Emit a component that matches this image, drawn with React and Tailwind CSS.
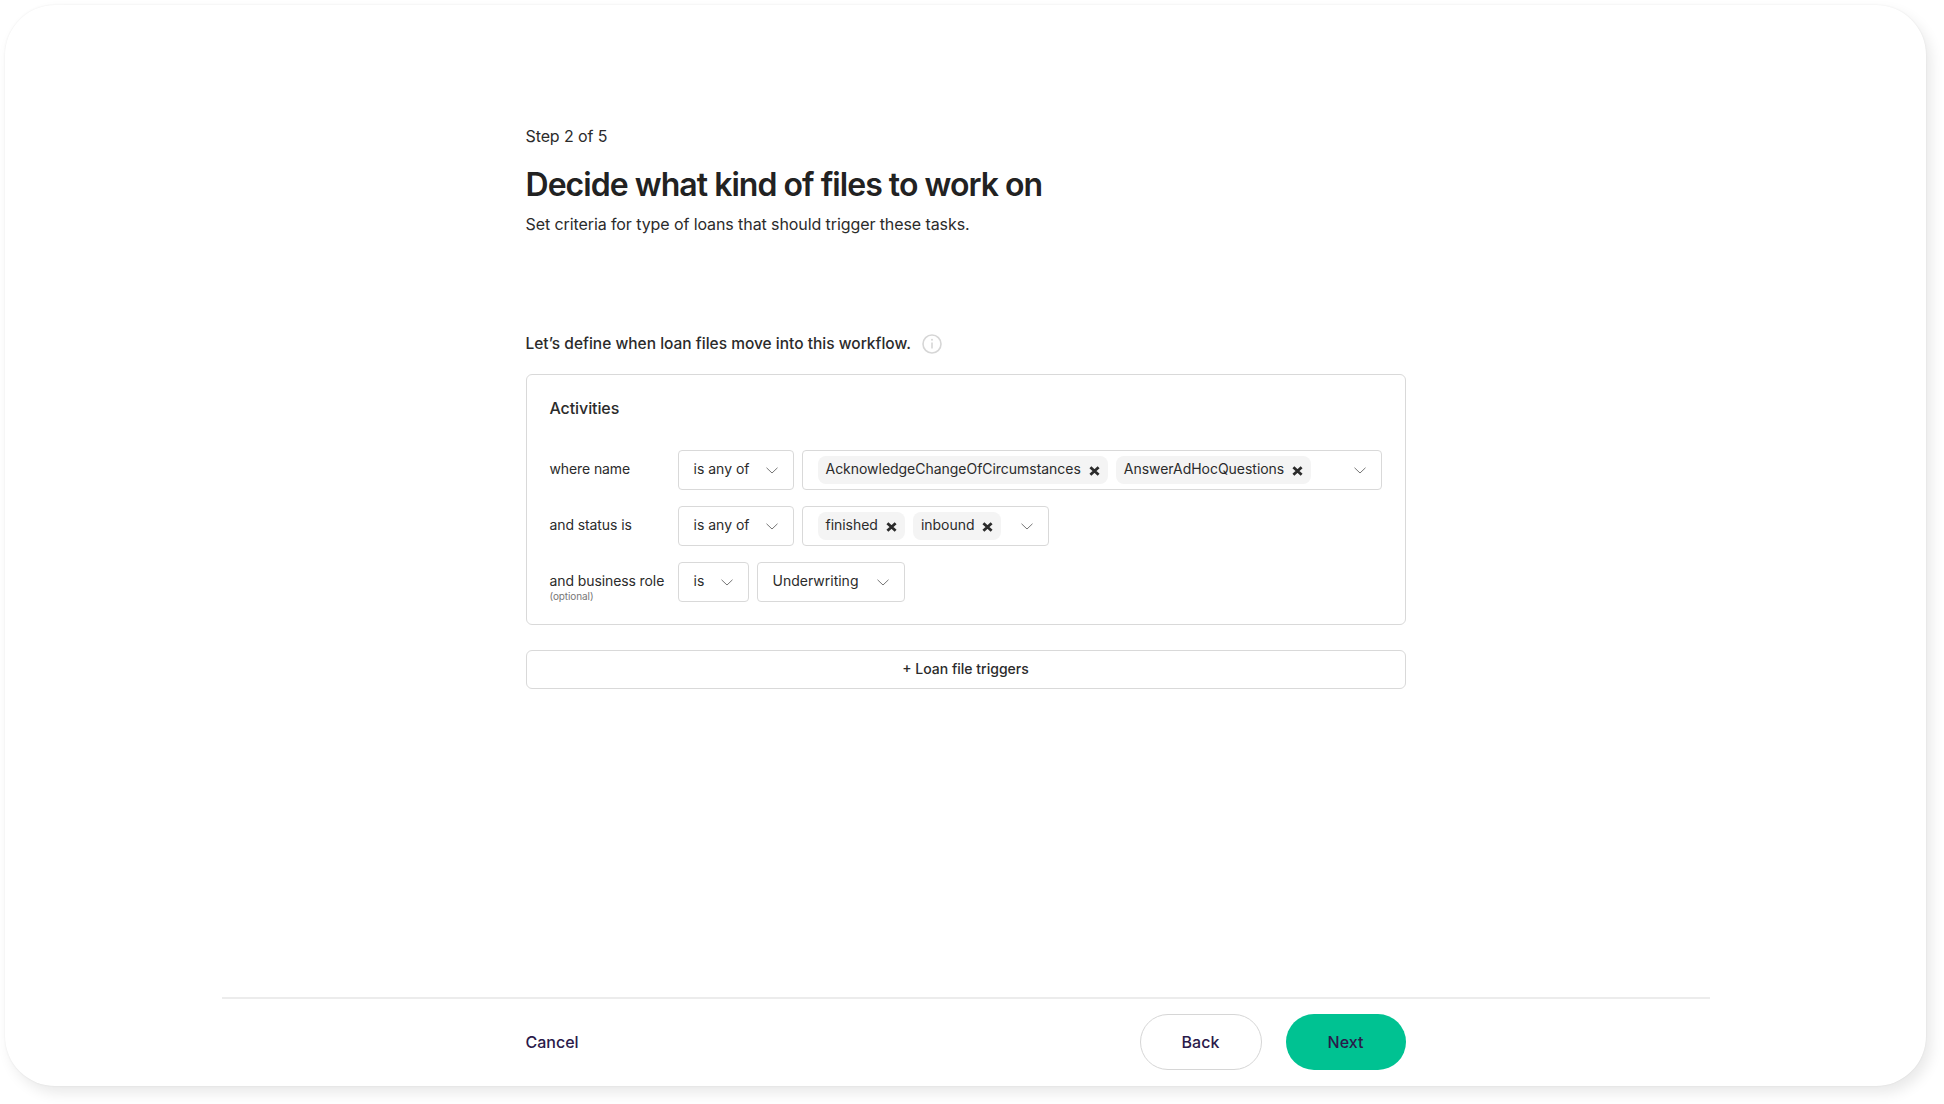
import { Fragment } from "react";

const Chevron = () => (
  <svg width="12" height="7" viewBox="0 0 12 7" fill="none" className="shrink-0">
    <path d="M0.5 0.75 L6 6 L11.5 0.75" stroke="#767676" strokeWidth="1" />
  </svg>
);

const Remove = () => (
  <svg width="11" height="10" viewBox="0 0 11 10" fill="none" className="shrink-0 mt-[2px]">
    <path d="M1.4 1.2 L9.6 8.8 M9.6 1.2 L1.4 8.8" stroke="#2b2b2b" strokeWidth="2.8" />
  </svg>
);

const Chip = ({ label }) => (
  <div className="flex h-[28px] items-center gap-2 rounded-lg bg-[#f4f4f4] pl-2 pr-2">
    <span className="pb-[3px] tracking-[-0.03px]">{label}</span>
    <Remove />
  </div>
);

const Select = ({ label, className }) => (
  <div className={`flex h-10 items-center justify-between rounded border border-[#d9d9d9] pl-[15px] pr-[15px] ${className}`}>
    <span className="pb-[3px]">{label}</span>
    <Chevron />
  </div>
);

const MultiSelect = ({ chips, className }) => (
  <div className={`flex h-10 items-center justify-between gap-5 rounded border border-[#d9d9d9] pl-[15px] pr-[15px] ${className}`}>
    <div className="flex gap-2">
      {chips.map((c) => (
        <Fragment key={c}>
          <Chip label={c} />
        </Fragment>
      ))}
    </div>
    <Chevron />
  </div>
);

export default function App() {
  return (
    <div className="h-[1104px] w-[1944px] overflow-hidden bg-white pl-[5px] pt-[5px] font-['Inter',sans-serif] text-[#2b2b2b]">
      <div className="flex h-[1081px] w-[1921px] flex-col rounded-[50px] bg-white shadow-[5px_7px_14px_rgba(0,0,0,0.09),0_0_2px_rgba(0,0,0,0.08)]">
        <div className="mx-auto w-[880px] pt-[119px]">
          <div className="text-[16px] leading-6 tracking-[-0.1px]">Step 2 of 5</div>
          <h1 className="mt-[17px] text-[32px] font-semibold leading-10 tracking-[-0.03em] text-[#222222]">
            Decide what kind of files to work on
          </h1>
          <p className="mt-[7px] text-[16px] leading-6 tracking-[-0.09px]">Set criteria for type of loans that should trigger these tasks.</p>

          <div className="mt-[96px] flex h-6 items-center gap-[11px] text-[15.5px] font-medium">
            <span>Let’s define when loan files move into this workflow.</span>
            <svg width="20" height="20" viewBox="0 0 20 20" fill="none">
              <circle cx="10" cy="10" r="9" stroke="#d6d6d6" strokeWidth="1.6" />
              <path d="M10 8.5 V14.5" stroke="#d6d6d6" strokeWidth="1.6" />
              <circle cx="10" cy="5.8" r="1" fill="#d6d6d6" />
            </svg>
          </div>

          <div className="mt-[18px] h-[251px] rounded-md border border-[#d9d9d9] px-[23px] pt-[21px] text-[14px]">
            <div className="text-[16px] font-medium leading-6 tracking-[-0.1px]">Activities</div>
            <div className="mt-[30px] flex flex-col gap-4">
              <div className="flex items-center gap-2">
                <div className="w-[120px] shrink-0 pb-[3px] tracking-[-0.1px]">where name</div>
                <Select label="is any of" className="w-[116px]" />
                <MultiSelect chips={["AcknowledgeChangeOfCircumstances", "AnswerAdHocQuestions"]} className="flex-1" />
              </div>
              <div className="flex items-center gap-2">
                <div className="w-[120px] shrink-0 pb-[3px] tracking-[-0.1px]">and status is</div>
                <Select label="is any of" className="w-[116px]" />
                <MultiSelect chips={["finished", "inbound"]} className="w-[247px]" />
              </div>
              <div className="flex items-center gap-2">
                <div className="relative w-[120px] shrink-0 pb-[3px] tracking-[-0.1px]">
                  and business role
                  <div className="absolute left-0 top-[19px] text-[10px] text-[#777777]">(optional)</div>
                </div>
                <Select label="is" className="w-[71px]" />
                <Select label="Underwriting" className="w-[148px]" />
              </div>
            </div>
          </div>

          <button className="mt-[25px] h-[39px] w-full rounded-md border border-[#d9d9d9] pb-[2px] text-[14px] font-medium">
            + Loan file triggers
          </button>
        </div>

        <div className="mx-auto mt-auto w-[1488px] border-t-2 border-[#ececec] pb-4 pt-[15px]">
          <div className="mx-auto flex w-[880px] items-center justify-between text-[16px] font-medium text-[#2a1a4a]">
            <button>Cancel</button>
            <div className="flex gap-6">
              <button className="h-14 w-[122px] rounded-full border border-[#d6d6d6]">Back</button>
              <button className="h-14 w-[120px] rounded-full bg-[#00c292]">Next</button>
            </div>
          </div>
        </div>
      </div>
    </div>
  );
}
